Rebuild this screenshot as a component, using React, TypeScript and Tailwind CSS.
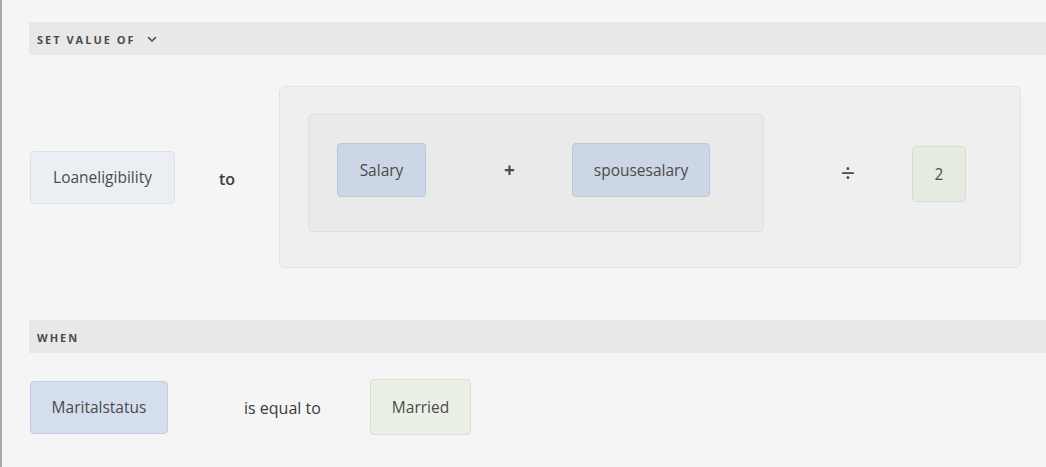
import React from "react";

const font = { fontFamily: '"Open Sans", "Liberation Sans", sans-serif' };

function Header({ label, chevron }: { label: string; chevron?: boolean }) {
  return (
    <div className="ml-[27px] h-[33px] bg-[#e8e8e8] flex items-center pl-[8px]">
      <span className="text-[11px] font-bold tracking-[2px] text-[#4b4b4b] leading-none pt-[2px]">
        {label}
      </span>
      {chevron && (
        <svg width="10" height="7" viewBox="0 0 10 7" className="ml-[11px] mt-[1px]">
          <path d="M1.5 1.5 L5 5 L8.5 1.5" fill="none" stroke="#4b4b4b" strokeWidth="1.6" strokeLinecap="round" strokeLinejoin="round" />
        </svg>
      )}
    </div>
  );
}

function Chip({ text, cls }: { text: string; cls: string }) {
  return (
    <div className={`shrink-0 flex items-center justify-center rounded-[4px] border pt-[2px] text-[15.5px] text-[#4b4b4b] ${cls}`}>
      {text}
    </div>
  );
}

export default function App() {
  return (
    <div className="w-[1046px] h-[467px] bg-[#f5f5f5] border-l-[2px] border-[#a8a8a8] overflow-hidden pt-[22px]" style={font}>
      <Header label="SET VALUE OF" chevron />

      <div className="ml-[28px] mt-[31px] flex items-center">
        <Chip text="Loaneligibility" cls="w-[145px] h-[53px] bg-[#ebeef3] border-[#dde2ea]" />
        <div className="w-[104px] pl-[44px] pt-[3px] text-[16px] font-semibold text-[#3d3d3d]">to</div>
        <div className="w-[742px] h-[182px] rounded-[6px] border border-[#e1e1e1] bg-[#efefef] pl-[28px] pt-[27px] flex items-start">
          <div className="w-[456px] h-[118px] rounded-[5px] border border-[#dedede] bg-[#eaeaea] pl-[28px] pt-[28px] flex items-start">
            <Chip text="Salary" cls="w-[89px] h-[54px] bg-[#ccd6e5] border-[#bac7da]" />
            <div className="ml-[78px] w-[11px] h-[54px] flex items-center justify-center text-[19px] font-bold text-[#4b4b4b] leading-none">+</div>
            <Chip text="spousesalary" cls="ml-[57px] w-[138px] h-[54px] bg-[#ccd6e5] border-[#bac7da]" />
          </div>
          <div className="self-stretch flex items-center pb-[35px]">
            <div className="ml-[77px] w-[14px] flex items-center justify-center text-[25px] text-[#4b4b4b] leading-none -mt-[2px]">÷</div>
            <Chip text="2" cls="ml-[57px] w-[54px] h-[56px] mt-[2px] bg-[#e5ebe0] border-[#d6ddd0]" />
          </div>
        </div>
      </div>

      <div className="mt-[52px]">
        <Header label="WHEN" />
      </div>

      <div className="ml-[28px] mt-[26px] h-[56px] flex items-center">
        <Chip text="Maritalstatus" cls="w-[138px] h-[53px] bg-[#d5deec] border-[#c2cee0]" />
        <div className="w-[202px] pl-[76px] pt-[2px] text-[16px] text-[#3a3a3a]">is equal to</div>
        <Chip text="Married" cls="w-[101px] h-[56px] bg-[#ebf0e6] border-[#d9dfd3]" />
      </div>
    </div>
  );
}
